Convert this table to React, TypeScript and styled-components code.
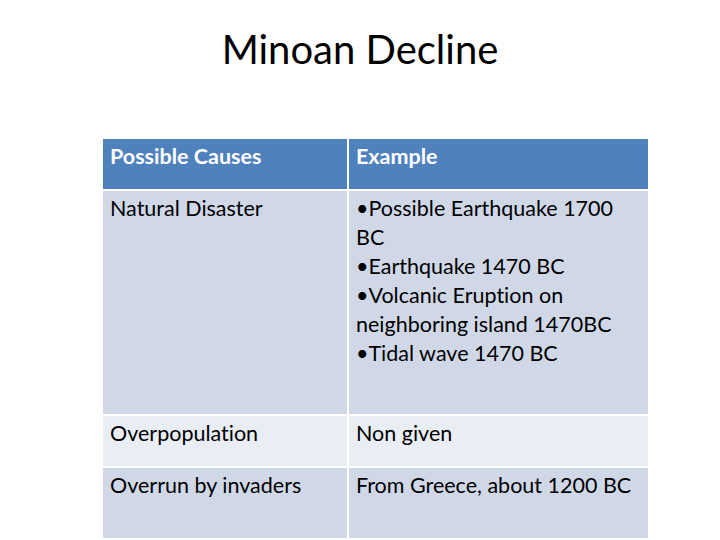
import { Fragment } from 'react'
import styled, { createGlobalStyle } from 'styled-components'

const GlobalStyle = createGlobalStyle`
  html, body {
    margin: 0;
    padding: 0;
    background: #ffffff;
  }
  body {
    font-family: Lato, "Open Sans", sans-serif;
    font-variant-ligatures: none;
    color: #000000;
  }
`

const Slide = styled.div`
  width: 720px;
  height: 540px;
  overflow: hidden;
  display: flex;
  flex-direction: column;
  align-items: stretch;
`

const Title = styled.h1`
  margin: 0;
  padding-top: 25px;
  height: 139px;
  box-sizing: border-box;
  text-align: center;
  font-family: Lato, sans-serif;
  font-weight: 400;
  font-size: 40px;
  line-height: 48px;
`

const Table = styled.div`
  margin-left: 103px;
  width: 545px;
  display: grid;
  grid-template-columns: 244px 1fr;
  gap: 2px;
`

const Cell = styled.div<{ $tone: 'head' | 'dark' | 'light'; $height: number }>`
  height: ${({ $height }) => $height}px;
  box-sizing: border-box;
  padding: 3px 7px 0 7px;
  font-size: 21.5px;
  line-height: 29px;
  font-weight: ${({ $tone }) => ($tone === 'head' ? 700 : 400)};
  color: ${({ $tone }) => ($tone === 'head' ? '#ffffff' : '#000000')};
  background: ${({ $tone }) =>
    $tone === 'head' ? '#4f81bd' : $tone === 'dark' ? '#d0d8e8' : '#e9edf4'};
`

const Line = styled.div`
  white-space: nowrap;
`

const rows = [
  {
    tone: 'dark' as const,
    height: 223,
    cause: 'Natural Disaster',
    example: [
      '•Possible Earthquake 1700',
      'BC',
      '•Earthquake 1470 BC',
      '•Volcanic Eruption on',
      'neighboring island 1470BC',
      '•Tidal wave 1470 BC',
    ],
  },
  {
    tone: 'light' as const,
    height: 50,
    cause: 'Overpopulation',
    example: ['Non given'],
  },
  {
    tone: 'dark' as const,
    height: 70,
    cause: 'Overrun by invaders',
    example: ['From Greece, about 1200 BC'],
  },
]

export default function App() {
  return (
    <>
      <GlobalStyle />
      <Slide>
        <Title>Minoan Decline</Title>
        <Table>
          <Cell $tone="head" $height={50}>
            Possible Causes
          </Cell>
          <Cell $tone="head" $height={50}>
            Example
          </Cell>
          {rows.map((row) => (
            <Fragment key={row.cause}>
              <Cell $tone={row.tone} $height={row.height}>
                {row.cause}
              </Cell>
              <Cell $tone={row.tone} $height={row.height}>
                {row.example.map((line) => (
                  <Line key={line}>{line}</Line>
                ))}
              </Cell>
            </Fragment>
          ))}
        </Table>
      </Slide>
    </>
  )
}
